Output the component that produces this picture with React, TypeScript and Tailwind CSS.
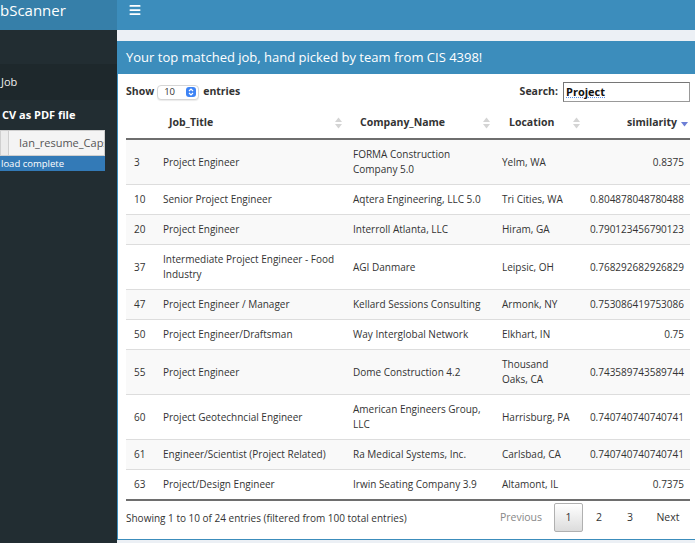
import { Menu } from 'lucide-react';

type Row = { id: number; title: string; company: string; location: string; sim: string };

const rows: Row[] = [
  { id: 3, title: 'Project Engineer', company: 'FORMA Construction\nCompany 5.0', location: 'Yelm, WA', sim: '0.8375' },
  { id: 10, title: 'Senior Project Engineer', company: 'Aqtera Engineering, LLC 5.0', location: 'Tri Cities, WA', sim: '0.804878048780488' },
  { id: 20, title: 'Project Engineer', company: 'Interroll Atlanta, LLC', location: 'Hiram, GA', sim: '0.790123456790123' },
  { id: 37, title: 'Intermediate Project Engineer - Food\nIndustry', company: 'AGI Danmare', location: 'Leipsic, OH', sim: '0.768292682926829' },
  { id: 47, title: 'Project Engineer / Manager', company: 'Kellard Sessions Consulting', location: 'Armonk, NY', sim: '0.753086419753086' },
  { id: 50, title: 'Project Engineer/Draftsman', company: 'Way Interglobal Network', location: 'Elkhart, IN', sim: '0.75' },
  { id: 55, title: 'Project Engineer', company: 'Dome Construction 4.2', location: 'Thousand\nOaks, CA', sim: '0.743589743589744' },
  { id: 60, title: 'Project Geotechncial Engineer', company: 'American Engineers Group,\nLLC', location: 'Harrisburg, PA', sim: '0.740740740740741' },
  { id: 61, title: 'Engineer/Scientist (Project Related)', company: 'Ra Medical Systems, Inc.', location: 'Carlsbad, CA', sim: '0.740740740740741' },
  { id: 63, title: 'Project/Design Engineer', company: 'Irwin Seating Company 3.9', location: 'Altamont, IL', sim: '0.7375' },
];

const SortIcon = () => (
  <svg width="7" height="12" viewBox="0 0 7 12" className="shrink-0">
    <polygon points="0,5 3.5,0.5 7,5" fill="#d4d4d4" />
    <polygon points="0,7 3.5,11.5 7,7" fill="#d4d4d4" />
  </svg>
);

const Sidebar = () => (
  <aside className="w-[117px] shrink-0 bg-[#222d32] text-white overflow-hidden">
    <div className="h-[34px]" />
    <div className="h-[36px] bg-[#1e282c] flex items-center pl-[1px] text-[11px] text-[#f0f0f0]">Job</div>
    <div className="h-[30px] flex items-center pl-[2px] text-[11px] font-bold">CV as PDF file</div>
    <div className="w-[105px] h-[26px] flex border border-[#cfcfcf] bg-[#f4f4f4]">
      <div className="w-[8px] bg-[#ececec] border-r border-[#cfcfcf]" />
      <div className="flex-1 pl-[10px] flex items-center overflow-hidden whitespace-nowrap text-[11px] text-[#555]">
        Ian_resume_Capstone.pdf
      </div>
    </div>
    <div className="w-[105px] h-[15px] bg-[#337ab7] flex items-center pl-[1px] text-[9.5px] leading-none text-white">
      load complete
    </div>
  </aside>
);

export default function App() {
  return (
    <div className="w-[695px] h-[543px] overflow-hidden flex flex-col bg-[#ecf0f5] font-['Open_Sans',sans-serif] text-[#333]">
      {/* top bar */}
      <header className="h-[30px] flex shrink-0">
        <div className="w-[117px] bg-[#367fa9] text-white text-[15px] leading-[20px] overflow-hidden whitespace-nowrap">
          bScanner
        </div>
        <div className="flex-1 bg-[#3c8dbc] pl-[11px] pt-[3px] text-white">
          <Menu size={14} strokeWidth={3} />
        </div>
      </header>

      <div className="flex flex-1 min-h-0">
        <Sidebar />

        <main className="flex-1 min-w-0 overflow-hidden pt-[11px]">
          <section className="w-[600px] border border-[#3c8dbc] bg-white">
            <div className="h-[32px] bg-[#3c8dbc] flex items-center pl-[8px] text-white text-[13px]">
              Your top matched job, hand picked by team from CIS 4398!
            </div>

            <div className="pl-[8px] pt-[8px] w-[572px]">
              {/* length + search */}
              <div className="h-[20px] flex items-center justify-between text-[10.5px]">
                <div className="flex items-center">
                  <span className="font-bold">Show</span>
                  <div className="ml-[3px] mr-[4px] w-[42px] h-[15px] rounded-[4px] border border-[#d6d6d6] bg-white shadow-[0_1px_1px_rgba(0,0,0,0.08)] flex items-center justify-between pl-[6px] pr-[2px] text-[9.5px]">
                    <span>10</span>
                    <span className="w-[10px] h-[10px] rounded-[3px] bg-[#3d83f5] flex items-center justify-center">
                      <svg width="6" height="8" viewBox="0 0 6 8">
                        <polyline points="1,3 3,1 5,3" fill="none" stroke="white" strokeWidth="1.2" />
                        <polyline points="1,5 3,7 5,5" fill="none" stroke="white" strokeWidth="1.2" />
                      </svg>
                    </span>
                  </div>
                  <span className="font-bold">entries</span>
                </div>
                <div className="flex items-center">
                  <span className="font-bold mr-[5px]">Search:</span>
                  <div className="w-[127px] h-[20px] border border-[#999] border-t-[#767676] border-l-[#767676] bg-white flex items-center pl-[2px]">
                    <span className="font-bold text-[11px] text-[#111] underline decoration-dotted decoration-[#5b8fe8]">Project</span>
                  </div>
                </div>
              </div>

              {/* table */}
              <table className="mt-[5px] w-[564px] table-fixed border-collapse text-[10px] leading-[15px]">
                <colgroup>
                  <col className="w-[29px]" />
                  <col className="w-[190px]" />
                  <col className="w-[149px]" />
                  <col className="w-[90px]" />
                  <col className="w-[106px]" />
                </colgroup>
                <thead>
                  <tr className="h-[32px] border-b-2 border-[#6e6e6e] text-[10.5px] font-bold">
                    <th />
                    <th className="pl-[14px] pr-[3px]">
                      <div className="flex items-center justify-between"><span>Job_Title</span><SortIcon /></div>
                    </th>
                    <th className="pl-[15px] pr-[4px]">
                      <div className="flex items-center justify-between"><span>Company_Name</span><SortIcon /></div>
                    </th>
                    <th className="pl-[15px] pr-[4px]">
                      <div className="flex items-center justify-between"><span>Location</span><SortIcon /></div>
                    </th>
                    <th className="pr-[2px]">
                      <div className="flex items-center justify-end gap-[4px]">
                        <span>similarity</span>
                        <svg width="7" height="5" viewBox="0 0 7 5" className="mt-[3px]"><polygon points="0,0 7,0 3.5,4.5" fill="#6d7fd6" /></svg>
                      </div>
                    </th>
                  </tr>
                </thead>
                <tbody>
                  {rows.map((r, i) => (
                    <tr key={r.id} className={`${i > 0 ? 'border-t border-[#dddddd]' : ''} ${i % 2 === 0 ? 'bg-[#f9f9f9]' : 'bg-white'}`}>
                      <td className="py-[7px] pl-[8px] align-middle">{r.id}</td>
                      <td className="py-[7px] pl-[8px] whitespace-pre overflow-hidden align-middle">{r.title}</td>
                      <td className="py-[7px] pl-[8px] whitespace-pre overflow-hidden align-middle">{r.company}</td>
                      <td className="py-[7px] pl-[8px] whitespace-pre overflow-hidden align-middle">{r.location}</td>
                      <td className="py-[7px] pr-[6px] text-right align-middle">{r.sim}</td>
                    </tr>
                  ))}
                </tbody>
              </table>

              {/* footer */}
              <div className="w-[564px] h-[40px] border-t-2 border-[#6e6e6e] flex items-start justify-between text-[10px]">
                <div className="h-[34px] flex items-center">
                  Showing 1 to 10 of 24 entries (filtered from 100 total entries)
                </div>
                <div className="mt-[2px] flex items-center text-[10.5px]">
                  <span className="w-[64px] h-[29px] flex items-center justify-center text-[#888]">Previous</span>
                  <span className="ml-[1px] w-[29px] h-[29px] flex items-center justify-center border border-[#b0b0b0] rounded-[2px] bg-gradient-to-b from-white to-[#dcdcdc]">1</span>
                  <span className="ml-[1px] w-[30px] h-[29px] flex items-center justify-center">2</span>
                  <span className="w-[32px] h-[29px] flex items-center justify-center">3</span>
                  <span className="w-[44px] h-[29px] flex items-center justify-center">Next</span>
                </div>
              </div>
            </div>
          </section>
        </main>
      </div>
    </div>
  );
}
